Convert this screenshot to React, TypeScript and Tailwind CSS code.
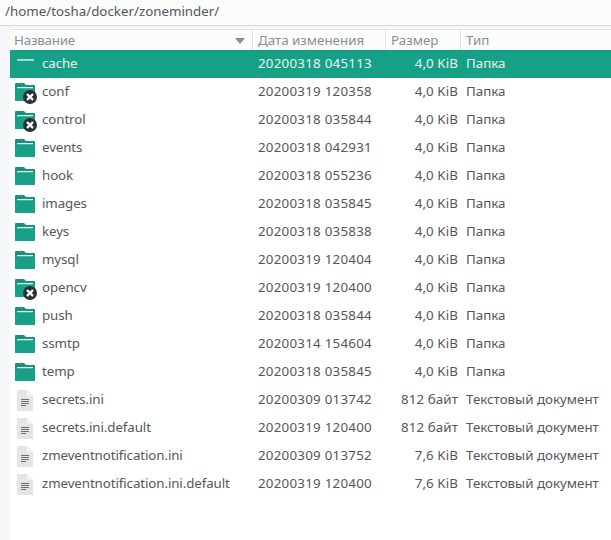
const folders: [string, string, boolean][] = [
  ["cache", "20200318 045113", false],
  ["conf", "20200319 120358", true],
  ["control", "20200318 035844", true],
  ["events", "20200318 042931", false],
  ["hook", "20200318 055236", false],
  ["images", "20200318 035845", false],
  ["keys", "20200318 035838", false],
  ["mysql", "20200319 120404", false],
  ["opencv", "20200319 120400", true],
  ["push", "20200318 035844", false],
  ["ssmtp", "20200314 154604", false],
  ["temp", "20200318 035845", false],
];
const files: [string, string, string][] = [
  ["secrets.ini", "20200309 013742", "812 байт"],
  ["secrets.ini.default", "20200319 120400", "812 байт"],
  ["zmeventnotification.ini", "20200309 013752", "7,6 KiB"],
  ["zmeventnotification.ini.default", "20200319 120400", "7,6 KiB"],
];

function FolderIcon({ selected, locked }: { selected?: boolean; locked?: boolean }) {
  return (
    <svg width="28" height="28" viewBox="0 0 28 28" className="shrink-0">
      {!selected && (
        <path d="M5 6a1 1 0 0 1 1-1h8l2 2h8a1 1 0 0 1 1 1v14a1 1 0 0 1-1 1H6a1 1 0 0 1-1-1z" fill="#15937b" />
      )}
      {!selected && <rect x="7" y="9" width="16" height="1.5" fill="#e6f4f1" />}
      {selected && <rect x="7" y="9.2" width="17" height="1.5" fill="#d9f0ea" />}
      {!selected && <path d="M5 10.5h20V22a1 1 0 0 1-1 1H6a1 1 0 0 1-1-1z" fill="#16a085" />}
      {locked && (
        <>
          <circle cx="20" cy="19" r="7" fill="#2b3036" />
          <path d="M17.6 16.6l4.8 4.8M22.4 16.6l-4.8 4.8" stroke="#ffffff" strokeWidth="2.2" strokeLinecap="round" />
        </>
      )}
    </svg>
  );
}

function FileIcon() {
  return (
    <svg width="28" height="28" viewBox="0 0 28 28" className="shrink-0">
      <path d="M7 4h10l6 6v15H7z" fill="#e3e4e5" />
      <path d="M17 4l6 6h-6z" fill="#f1f2f2" />
      <path d="M11 13.5h8M11 15.5h8M11 17.5h8M11 19.5h5" stroke="#6c7074" strokeWidth="1" />
    </svg>
  );
}

function Cells({ name, date, size, type, selected, icon }: { name: string; date: string; size: string; type: string; selected?: boolean; icon: React.ReactNode }) {
  return (
    <div className={`flex h-[28px] items-center text-[13.33px] ${selected ? "bg-[#16a085] text-[#e6f6f2]" : "text-[#53575c]"}`}>
      <div className="flex w-[243px] items-center">
        <div className="flex w-[32px] justify-start">{icon}</div>
        <span className="mb-[1px] tracking-[-0.1px]">{name}</span>
      </div>
      <div className="mb-[1px] w-[133px] pl-[5px] tracking-[0.25px]">{date}</div>
      <div className="mb-[1px] w-[72px] text-right tracking-[0.1px]">{size}</div>
      <div className="mb-[1px] whitespace-nowrap pl-[8px]">{type}</div>
    </div>
  );
}

export default function App() {
  return (
    <div className="h-[540px] w-[611px] overflow-hidden bg-[#f6f7f8] font-['Noto_Sans',sans-serif]">
      <div className="flex h-[26px] items-center border-b border-[#d5d8da] bg-[#fbfcfc] pb-[1px] pl-[5px] text-[13.33px] text-[#53575c]">
        /home/tosha/docker/zoneminder/
      </div>
      <div className="ml-[10px] mt-[3px] h-[511px] bg-white">
        <div className="flex h-[21px] items-center border-t border-[#e4e6e8] bg-[#fbfcfc] text-[13.33px] text-[#8a8f94]">
          <div className="flex h-full w-[243px] items-center justify-between border-r border-[#e2e4e6] pl-[4px] pr-[7px] pt-[1px]">
            <span className="tracking-[-0.2px]">Название</span>
            <svg width="10" height="6" viewBox="0 0 10 6">
              <path d="M0 0h10L5 6z" fill="#8a8f94" />
            </svg>
          </div>
          <div className="flex h-full w-[133px] items-center border-r border-[#e2e4e6] pl-[5px] pt-[1px]">Дата изменения</div>
          <div className="flex h-full w-[75px] items-center border-r border-[#e2e4e6] pl-[5px] pt-[1px]">Размер</div>
          <div className="flex h-full items-center pl-[5px] pt-[1px]">Тип</div>
        </div>
        {folders.map(([n, d, l], i) => (
          <Cells key={n} name={n} date={d} size="4,0 KiB" type="Папка" selected={i === 0} icon={<FolderIcon selected={i === 0} locked={l} />} />
        ))}
        {files.map(([n, d, s]) => (
          <Cells key={n} name={n} date={d} size={s} type="Текстовый документ" icon={<FileIcon />} />
        ))}
      </div>
    </div>
  );
}
